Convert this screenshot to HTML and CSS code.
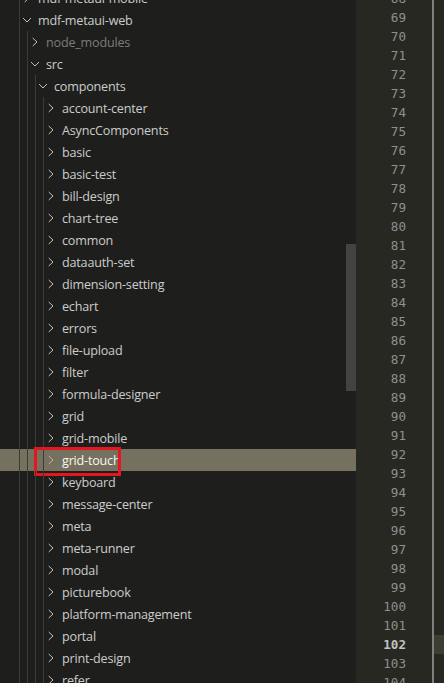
FILE: index.html
```html
<!DOCTYPE html>
<html>
<head>
<meta charset="utf-8">
<link rel="stylesheet" href="styles.css">
</head>
<body>
<div class="app">
  <div class="explorer">
    <div class="tree">
      <div class="row"><span class="g"></span><span class="tw"><svg viewBox="0 0 16 16"><path d="M5.7 4L10 8L5.7 12"/></svg></span><span class="label">mdf-metaui-mobile</span></div>
      <div class="row"><span class="g"></span><span class="tw"><svg viewBox="0 0 16 16"><path d="M4 6L8 10L12 6"/></svg></span><span class="label">mdf-metaui-web</span></div>
      <div class="row"><span class="g"></span><span class="g"></span><span class="tw"><svg viewBox="0 0 16 16"><path d="M5.7 4L10 8L5.7 12"/></svg></span><span class="label dim">node_modules</span></div>
      <div class="row"><span class="g"></span><span class="g"></span><span class="tw"><svg viewBox="0 0 16 16"><path d="M4 6L8 10L12 6"/></svg></span><span class="label">src</span></div>
      <div class="row"><span class="g"></span><span class="g"></span><span class="g"></span><span class="tw"><svg viewBox="0 0 16 16"><path d="M4 6L8 10L12 6"/></svg></span><span class="label">components</span></div>
      <div class="row"><span class="g"></span><span class="g"></span><span class="g"></span><span class="g"></span><span class="tw"><svg viewBox="0 0 16 16"><path d="M5.7 4L10 8L5.7 12"/></svg></span><span class="label">account-center</span></div>
      <div class="row"><span class="g"></span><span class="g"></span><span class="g"></span><span class="g"></span><span class="tw"><svg viewBox="0 0 16 16"><path d="M5.7 4L10 8L5.7 12"/></svg></span><span class="label">AsyncComponents</span></div>
      <div class="row"><span class="g"></span><span class="g"></span><span class="g"></span><span class="g"></span><span class="tw"><svg viewBox="0 0 16 16"><path d="M5.7 4L10 8L5.7 12"/></svg></span><span class="label">basic</span></div>
      <div class="row"><span class="g"></span><span class="g"></span><span class="g"></span><span class="g"></span><span class="tw"><svg viewBox="0 0 16 16"><path d="M5.7 4L10 8L5.7 12"/></svg></span><span class="label">basic-test</span></div>
      <div class="row"><span class="g"></span><span class="g"></span><span class="g"></span><span class="g"></span><span class="tw"><svg viewBox="0 0 16 16"><path d="M5.7 4L10 8L5.7 12"/></svg></span><span class="label">bill-design</span></div>
      <div class="row"><span class="g"></span><span class="g"></span><span class="g"></span><span class="g"></span><span class="tw"><svg viewBox="0 0 16 16"><path d="M5.7 4L10 8L5.7 12"/></svg></span><span class="label">chart-tree</span></div>
      <div class="row"><span class="g"></span><span class="g"></span><span class="g"></span><span class="g"></span><span class="tw"><svg viewBox="0 0 16 16"><path d="M5.7 4L10 8L5.7 12"/></svg></span><span class="label">common</span></div>
      <div class="row"><span class="g"></span><span class="g"></span><span class="g"></span><span class="g"></span><span class="tw"><svg viewBox="0 0 16 16"><path d="M5.7 4L10 8L5.7 12"/></svg></span><span class="label">dataauth-set</span></div>
      <div class="row"><span class="g"></span><span class="g"></span><span class="g"></span><span class="g"></span><span class="tw"><svg viewBox="0 0 16 16"><path d="M5.7 4L10 8L5.7 12"/></svg></span><span class="label">dimension-setting</span></div>
      <div class="row"><span class="g"></span><span class="g"></span><span class="g"></span><span class="g"></span><span class="tw"><svg viewBox="0 0 16 16"><path d="M5.7 4L10 8L5.7 12"/></svg></span><span class="label">echart</span></div>
      <div class="row"><span class="g"></span><span class="g"></span><span class="g"></span><span class="g"></span><span class="tw"><svg viewBox="0 0 16 16"><path d="M5.7 4L10 8L5.7 12"/></svg></span><span class="label">errors</span></div>
      <div class="row"><span class="g"></span><span class="g"></span><span class="g"></span><span class="g"></span><span class="tw"><svg viewBox="0 0 16 16"><path d="M5.7 4L10 8L5.7 12"/></svg></span><span class="label">file-upload</span></div>
      <div class="row"><span class="g"></span><span class="g"></span><span class="g"></span><span class="g"></span><span class="tw"><svg viewBox="0 0 16 16"><path d="M5.7 4L10 8L5.7 12"/></svg></span><span class="label">filter</span></div>
      <div class="row"><span class="g"></span><span class="g"></span><span class="g"></span><span class="g"></span><span class="tw"><svg viewBox="0 0 16 16"><path d="M5.7 4L10 8L5.7 12"/></svg></span><span class="label">formula-designer</span></div>
      <div class="row"><span class="g"></span><span class="g"></span><span class="g"></span><span class="g"></span><span class="tw"><svg viewBox="0 0 16 16"><path d="M5.7 4L10 8L5.7 12"/></svg></span><span class="label">grid</span></div>
      <div class="row"><span class="g"></span><span class="g"></span><span class="g"></span><span class="g"></span><span class="tw"><svg viewBox="0 0 16 16"><path d="M5.7 4L10 8L5.7 12"/></svg></span><span class="label">grid-mobile</span></div>
      <div class="row selected"><span class="g"></span><span class="g"></span><span class="g"></span><span class="g"></span><span class="tw"><svg viewBox="0 0 16 16"><path d="M5.7 4L10 8L5.7 12"/></svg></span><span class="label">grid-touch</span><span class="mark"></span></div>
      <div class="row"><span class="g"></span><span class="g"></span><span class="g"></span><span class="g"></span><span class="tw"><svg viewBox="0 0 16 16"><path d="M5.7 4L10 8L5.7 12"/></svg></span><span class="label">keyboard</span></div>
      <div class="row"><span class="g"></span><span class="g"></span><span class="g"></span><span class="g"></span><span class="tw"><svg viewBox="0 0 16 16"><path d="M5.7 4L10 8L5.7 12"/></svg></span><span class="label">message-center</span></div>
      <div class="row"><span class="g"></span><span class="g"></span><span class="g"></span><span class="g"></span><span class="tw"><svg viewBox="0 0 16 16"><path d="M5.7 4L10 8L5.7 12"/></svg></span><span class="label">meta</span></div>
      <div class="row"><span class="g"></span><span class="g"></span><span class="g"></span><span class="g"></span><span class="tw"><svg viewBox="0 0 16 16"><path d="M5.7 4L10 8L5.7 12"/></svg></span><span class="label">meta-runner</span></div>
      <div class="row"><span class="g"></span><span class="g"></span><span class="g"></span><span class="g"></span><span class="tw"><svg viewBox="0 0 16 16"><path d="M5.7 4L10 8L5.7 12"/></svg></span><span class="label">modal</span></div>
      <div class="row"><span class="g"></span><span class="g"></span><span class="g"></span><span class="g"></span><span class="tw"><svg viewBox="0 0 16 16"><path d="M5.7 4L10 8L5.7 12"/></svg></span><span class="label">picturebook</span></div>
      <div class="row"><span class="g"></span><span class="g"></span><span class="g"></span><span class="g"></span><span class="tw"><svg viewBox="0 0 16 16"><path d="M5.7 4L10 8L5.7 12"/></svg></span><span class="label">platform-management</span></div>
      <div class="row"><span class="g"></span><span class="g"></span><span class="g"></span><span class="g"></span><span class="tw"><svg viewBox="0 0 16 16"><path d="M5.7 4L10 8L5.7 12"/></svg></span><span class="label">portal</span></div>
      <div class="row"><span class="g"></span><span class="g"></span><span class="g"></span><span class="g"></span><span class="tw"><svg viewBox="0 0 16 16"><path d="M5.7 4L10 8L5.7 12"/></svg></span><span class="label">print-design</span></div>
      <div class="row"><span class="g"></span><span class="g"></span><span class="g"></span><span class="g"></span><span class="tw"><svg viewBox="0 0 16 16"><path d="M5.7 4L10 8L5.7 12"/></svg></span><span class="label">refer</span></div>
    </div>
    <div class="slider"></div>
  </div>
  <div class="editor">
    <div class="gutter">
      <div class="ln">68</div><div class="ln">69</div><div class="ln">70</div><div class="ln">71</div><div class="ln">72</div><div class="ln">73</div><div class="ln">74</div><div class="ln">75</div><div class="ln">76</div><div class="ln">77</div><div class="ln">78</div><div class="ln">79</div><div class="ln">80</div><div class="ln">81</div><div class="ln">82</div><div class="ln">83</div><div class="ln">84</div><div class="ln">85</div><div class="ln">86</div><div class="ln">87</div><div class="ln">88</div><div class="ln">89</div><div class="ln">90</div><div class="ln">91</div><div class="ln">92</div><div class="ln">93</div><div class="ln">94</div><div class="ln">95</div><div class="ln">96</div><div class="ln">97</div><div class="ln">98</div><div class="ln">99</div><div class="ln">100</div><div class="ln">101</div><div class="ln current">102</div><div class="ln">103</div><div class="ln">104</div>
    </div>
    <div class="guide"></div>
    <div class="code">
      <div class="cl"></div><div class="cl"></div><div class="cl"></div><div class="cl"></div><div class="cl"></div><div class="cl"></div><div class="cl"></div><div class="cl"></div><div class="cl"></div><div class="cl"></div><div class="cl"></div><div class="cl"></div><div class="cl"></div><div class="cl"></div><div class="cl"></div><div class="cl"></div><div class="cl"></div><div class="cl"></div><div class="cl"></div><div class="cl"></div><div class="cl"></div><div class="cl"></div><div class="cl"></div><div class="cl"></div><div class="cl"></div><div class="cl"></div><div class="cl"></div><div class="cl"></div><div class="cl"></div><div class="cl"></div><div class="cl"></div><div class="cl"></div><div class="cl"></div><div class="cl"></div><div class="cl active"></div><div class="cl"></div><div class="cl"></div>
    </div>
  </div>
</div>
</body>
</html>
```
FILE: styles.css
```css
html, body {
  margin: 0;
  padding: 0;
  background: #1e1f1c;
  overflow: hidden;
}
.app {
  display: flex;
  width: 444px;
  height: 683px;
  overflow: hidden;
}
.explorer {
  position: relative;
  width: 356px;
  flex: none;
  background: #1e1f1c;
  overflow: hidden;
}
.tree {
  margin-top: -13px;
}
.row {
  position: relative;
  display: flex;
  align-items: center;
  height: 22px;
  padding-left: 12px;
  font-family: "Open Sans", "Noto Sans", sans-serif;
  font-size: 12.6px;
  letter-spacing: -0.2px;
  color: #cccccc;
  white-space: nowrap;
}
.row.selected {
  background: #75715e;
  color: #f8f8f2;
}
.g {
  flex: none;
  width: 8px;
  height: 22px;
  box-sizing: border-box;
  border-right: 1px solid #3b3b38;
}
.tw {
  flex: none;
  width: 16px;
  height: 16px;
  margin-left: -1px;
  margin-right: 3px;
}
.tw svg {
  display: block;
  width: 16px;
  height: 16px;
  fill: none;
  stroke: #c0c0c0;
  stroke-width: 1;
}
.selected .tw svg {
  stroke: #b8b6aa;
}
.label {
  line-height: 22px;
  margin-top: 2px;
}
.label.dim {
  color: #7c7c7a;
}
.mark {
  position: absolute;
  left: 34px;
  top: -2px;
  width: 87px;
  height: 29px;
  box-sizing: border-box;
  border: 3px solid #e5161f;
}
.slider {
  position: absolute;
  left: 346px;
  top: 244px;
  width: 10px;
  height: 147px;
  background: #434341;
}
.editor {
  flex: 1;
  display: flex;
  background: #272822;
  overflow: hidden;
}
.gutter {
  width: 50px;
  flex: none;
  margin-top: -10.8px;
  font-family: "DejaVu Sans Mono", monospace;
  font-size: 12.6px;
  color: #90908a;
}
.ln {
  height: 19px;
  line-height: 19px;
  text-align: right;
}
.ln.current {
  color: #c2c2bf;
  font-weight: bold;
}
.guide {
  flex: none;
  width: 2px;
  margin-left: 26px;
  background: #7f7f7b;
}
.code {
  flex: 1;
  margin-top: -10.8px;
}
.cl {
  height: 19px;
}
.cl.active {
  background: #3e3d32;
}
```
